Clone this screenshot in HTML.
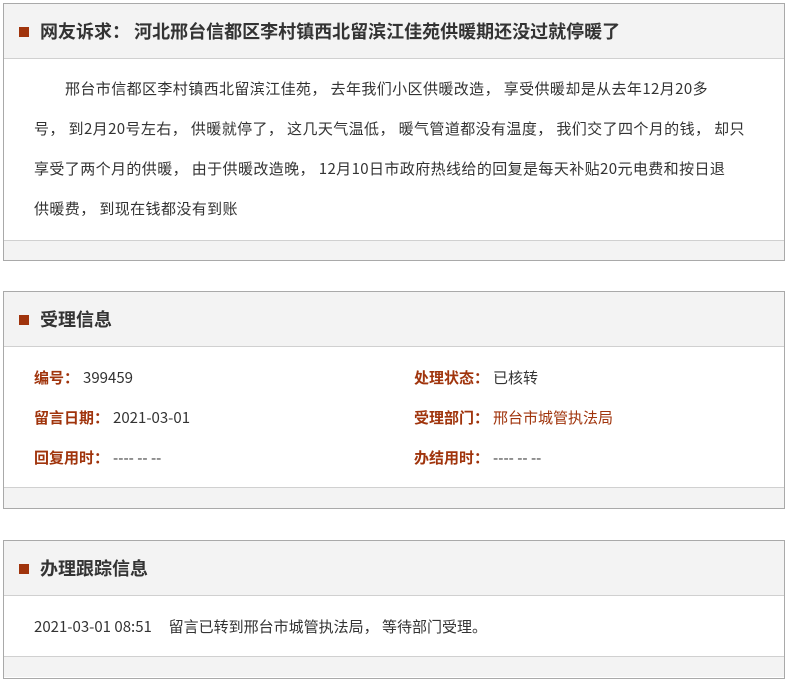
<!DOCTYPE html>
<html><head><meta charset="utf-8"><style>
*{margin:0;padding:0;box-sizing:border-box}
body{width:786px;height:681px;background:#fff;font-family:"Noto Sans CJK SC","Liberation Sans",sans-serif;color:#333;position:relative;overflow:hidden}
.box{position:absolute;left:3px;width:782px;border:1px solid #a9a9a9;background:#fff;overflow:hidden}
.hd{height:55px;background:#f3f3f3;border-bottom:1px solid #d0d0d0;position:relative}
.hd i{position:absolute;left:15px;top:23px;width:10px;height:10px;background:#a0340c}
.hd b{position:absolute;left:36px;top:15px;font-size:18px;line-height:25px;color:#333}
.ft{height:21px;background:#f3f3f3;border-top:1px solid #d0d0d0}
.p{font-size:15px;line-height:40px;padding:10px 0 0 30px;height:181px;white-space:nowrap;letter-spacing:0.4px}
.lab{color:#a0340c;font-weight:bold}
.lab em{font-style:normal;margin-right:4px}
.row{position:absolute;font-size:15px;line-height:20px}
</style></head><body>
<div class="box" style="top:3px;height:258px">
<div class="hd"><i></i><b>网友诉求：&nbsp;河北邢台信都区李村镇西北留滨江佳苑供暖期还没过就停暖了</b></div>
<div class="p"><span style="margin-left:31px"></span>邢台市信都区李村镇西北留滨江佳苑，&nbsp;去年我们小区供暖改造，&nbsp;享受供暖却是从去年12月20多<br>号，&nbsp;到2月20号左右，&nbsp;供暖就停了，&nbsp;这几天气温低，&nbsp;暖气管道都没有温度，&nbsp;我们交了四个月的钱，&nbsp;却只<br>享受了两个月的供暖，&nbsp;由于供暖改造晚，&nbsp;12月10日市政府热线给的回复是每天补贴20元电费和按日退<br>供暖费，&nbsp;到现在钱都没有到账</div>
<div class="ft"></div>
</div>
<div class="box" style="top:291px;height:218px">
<div class="hd"><i></i><b>受理信息</b></div>
<div style="height:140px;position:relative">
<div class="row" style="left:30px;top:21px"><span class="lab">编号<em>：</em></span>399459</div>
<div class="row" style="left:30px;top:61px"><span class="lab">留言日期<em>：</em></span>2021-03-01</div>
<div class="row" style="left:30px;top:101px"><span class="lab">回复用时<em>：</em></span>---- -- --</div>
<div class="row" style="left:410px;top:21px"><span class="lab">处理状态<em>：</em></span>已核转</div>
<div class="row" style="left:410px;top:61px"><span class="lab">受理部门<em>：</em></span><span style="color:#a0340c">邢台市城管执法局</span></div>
<div class="row" style="left:410px;top:101px"><span class="lab">办结用时<em>：</em></span>---- -- --</div>
</div>
<div class="ft"></div>
</div>
<div class="box" style="top:540px;height:139px">
<div class="hd"><i></i><b>办理跟踪信息</b></div>
<div style="height:60px;position:relative">
<div class="row" style="left:30px;top:21px">2021-03-01 08:51&nbsp;&nbsp;&nbsp;&nbsp; 留言已转到邢台市城管执法局，&nbsp;等待部门受理。</div>
</div>
<div class="ft"></div>
</div>
</body></html>
